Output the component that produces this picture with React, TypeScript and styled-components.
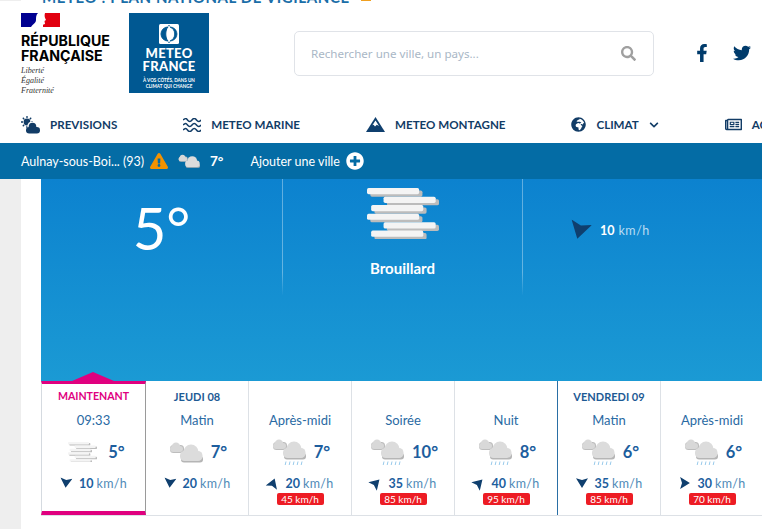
import React from "react";
import styled, { createGlobalStyle } from "styled-components";
import {
  FaChevronDown,
  FaExclamationTriangle,
  FaFacebookF,
  FaGlobeAfrica,
  FaPlusCircle,
  FaRegNewspaper,
  FaSearch,
  FaTwitter,
} from "react-icons/fa";

const Global = createGlobalStyle`
  html, body {
    margin: 0;
    padding: 0;
    background: #fff;
    overflow: hidden;
  }
  * { box-sizing: border-box; }
`;

const font = `"Lato", "Open Sans", sans-serif`;

const Page = styled.div`
  width: 762px;
  height: 529px;
  overflow: hidden;
  font-family: ${font};
  display: flex;
  flex-direction: column;
`;

const TopStrip = styled.div`
  height: 4px;
  padding-left: 42px;
  display: flex;
  align-items: flex-end;
  overflow: hidden;
  background: linear-gradient(#eee, #eee) 0 0 / 21px 1px no-repeat;
  color: #1a6ea8;
  font-size: 15px;
  font-weight: 700;
  line-height: 1;
  letter-spacing: 0.6px;
  white-space: nowrap;
`;

const StripText = styled.span`
  width: 319px;
  margin-bottom: -1px;
  overflow: hidden;
`;

const Ribbon = styled.span`
  width: 10px;
  height: 1px;
  margin-bottom: 3px;
  background: #f0a020;
`;

const Header = styled.header`
  height: 106px;
  padding: 9px 0 0 21px;
  display: flex;
  align-items: flex-start;
`;

const RepublicBlock = styled.div`
  width: 108px;
  display: flex;
  flex-direction: column;
`;

const RepublicName = styled.div`
  margin-top: 6px;
  color: #000;
  font-family: "Inter", sans-serif;
  font-size: 14.2px;
  font-weight: 700;
  line-height: 15px;
`;

const Motto = styled.div`
  margin-top: 3px;
  color: #333;
  font-family: "Liberation Serif", serif;
  font-size: 8px;
  font-style: italic;
  line-height: 10px;
`;

const MfLogo = styled.div`
  width: 80px;
  height: 80px;
  padding-top: 11px;
  display: flex;
  flex-direction: column;
  align-items: center;
  background: #005892;
  color: #fff;
`;

const MfName = styled.div`
  margin-top: 3px;
  font-size: 13px;
  font-weight: 900;
  line-height: 13px;
  letter-spacing: 0.3px;
  text-align: center;
`;

const MfSlogan = styled.div`
  margin-top: 4px;
  font-size: 4.6px;
  font-weight: 700;
  line-height: 6px;
  text-align: center;
`;

const SearchBox = styled.div`
  width: 360px;
  height: 45px;
  margin: 18px 0 0 85px;
  padding: 0 17px 0 16px;
  display: flex;
  align-items: center;
  justify-content: space-between;
  border: 1px solid #e0e3e8;
  border-radius: 5px;
  color: #a9b7c6;
  font-family: "Noto Sans", sans-serif;
  font-size: 11.6px;
`;

const Socials = styled.div`
  margin: 31px 0 0 39px;
  display: flex;
  align-items: center;
  gap: 22px;
  color: #003b6b;
  font-size: 18px;
`;

const Nav = styled.nav`
  height: 33px;
  padding: 0 0 4px 21px;
  display: flex;
  align-items: center;
  gap: 66px;
  overflow: hidden;
`;

const NavItem = styled.div`
  flex-shrink: 0;
  display: flex;
  align-items: center;
  gap: 10px;
  color: #123c66;
  font-size: 11.6px;
  font-weight: 700;
  white-space: nowrap;
`;

const CityBar = styled.div`
  height: 36px;
  padding-left: 21px;
  display: flex;
  align-items: center;
  background: #046ca5;
  color: #fff;
  font-size: 12.5px;
`;

const CityName = styled.span`
  width: 129px;
  white-space: nowrap;
`;

const Spacer = styled.span`
  width: 10px;
`;

const CityTemp = styled.span`
  margin: 0 27px 0 10px;
  font-weight: 700;
  font-size: 13.5px;
`;

const AddCity = styled.span`
  display: flex;
  align-items: center;
  gap: 6px;
`;

const Body = styled.div`
  flex: 1;
  display: flex;
  min-height: 0;
`;

const SideBand = styled.div`
  width: 21px;
  background: #eeeeee;
`;

const Main = styled.main`
  flex: 1;
  min-width: 0;
  margin-left: 20px;
`;

const Hero = styled.section`
  height: 202px;
  display: grid;
  grid-template-columns: 242px 240px 1fr;
  align-items: start;
  background: linear-gradient(#0c82cf, #1b9ad4);
  color: #fff;
`;

const HeroCell = styled.div<{ $divider?: boolean }>`
  height: 116px;
  display: flex;
  flex-direction: column;
  align-items: center;
  border-right: 1px solid transparent;
  ${(p) =>
    p.$divider &&
    `border-image: linear-gradient(rgba(255,255,255,.35) 80%, rgba(255,255,255,0)) 1;`}
`;

const HeroTemp = styled.div`
  margin-top: 15px;
  font-size: 58px;
  font-weight: 400;
  line-height: 68px;
`;

const HeroFog = styled.div`
  margin-top: 9px;
  line-height: 0;
`;

const HeroLabel = styled.div`
  margin-top: 20px;
  font-size: 15px;
  font-weight: 700;
`;

const HeroWind = styled.div`
  margin-top: 41px;
  padding-left: 46px;
  align-self: stretch;
  display: flex;
  align-items: center;
  gap: 10px;
  font-size: 12.5px;
`;

const HeroWindUnit = styled.span`
  margin-left: 4px;
  color: #b8dcf3;
  letter-spacing: 0.5px;
`;

const Strip = styled.section`
  position: relative;
  height: 135px;
  display: flex;
  border-bottom: 1px solid #dde1e6;
`;

const Notch = styled.span`
  position: absolute;
  left: 31px;
  top: -9px;
  width: 42px;
  height: 9px;
  background: #e0007f;
  clip-path: polygon(0 100%, 50% 0, 100% 100%);
`;

const Card = styled.article<{ $active?: boolean; $dayStart?: boolean }>`
  flex: 0 0 ${(p) => (p.$active ? "105px" : "103px")};
  height: 134px;
  padding-top: ${(p) => (p.$active ? "6px" : "9px")};
  display: flex;
  flex-direction: column;
  align-items: center;
  border-right: 1px solid ${(p) => (p.$active ? "#9a9a9a" : p.$dayStart ? "#2a6fa5" : "#dde1e6")};
  ${(p) =>
    p.$active &&
    `border-left: 1px solid #d5dae0;
     border-top: 3px solid #e0007f;
     border-bottom: 4px solid #e0007f;`}
`;

const Day = styled.div<{ $active?: boolean }>`
  height: 13px;
  color: ${(p) => (p.$active ? "#e0007f" : "#1d5a94")};
  font-size: ${(p) => (p.$active ? "10.6px" : "11px")};
  font-weight: 700;
  line-height: 13px;
  white-space: nowrap;
`;

const Moment = styled.div`
  margin-top: 10px;
  color: #2a6aa3;
  font-size: 13px;
  line-height: 15px;
`;

const WeatherRow = styled.div<{ $fog?: boolean }>`
  margin-top: 10px;
  padding-left: ${(p) => (p.$fog ? "6px" : "2px")};
  height: 28px;
  display: flex;
  align-items: center;
  gap: ${(p) => (p.$fog ? "11px" : "8px")};
`;

const Temp = styled.div`
  color: #1d5e9e;
  font-size: 16.5px;
  font-weight: 700;
`;

const WindRow = styled.div`
  margin-top: 10px;
  height: 14px;
  display: flex;
  align-items: center;
  gap: 7px;
  color: #1d5e9e;
  font-size: 12.5px;
  font-weight: 700;
  white-space: nowrap;
`;

const WindUnit = styled.span`
  margin-left: 3px;
  color: #4f8ab8;
  font-weight: 400;
  letter-spacing: 0.3px;
`;

const Gust = styled.div`
  margin-top: 3px;
  width: 47px;
  height: 12px;
  border-radius: 2px;
  background: #ed1c24;
  color: #fff;
  font-size: 10px;
  line-height: 12px;
  text-align: center;
`;

const Arrow = styled.svg<{ $angle: number }>`
  flex-shrink: 0;
  transform: rotate(${(p) => p.$angle}deg);
`;

const WindArrow = ({ angle, size = 12 }: { angle: number; size?: number }) => (
  <Arrow $angle={angle} width={size} height={size} viewBox="0 0 16 16">
    <path d="M8 1.5 L16 14.5 L8 12 L0 14.5 Z" fill="#0f3f6e" />
  </Arrow>
);

const Clouds = ({ rain, width = 34 }: { rain?: boolean; width?: number }) => (
  <svg
    width={width}
    height={(width * 28) / 34}
    viewBox={rain ? "0 0 34 28" : "0 -3 34 28"}
  >
    <rect x="1" y="4" width="14" height="8" rx="3.5" fill="#bdbdbd" />
    <circle cx="7" cy="5.6" r="4.2" fill="#d8d8d8" />
    <rect x="1" y="5" width="13" height="6" rx="3" fill="#d8d8d8" />
    <rect x="12" y="15" width="22" height="6.5" rx="3" fill="#b5b5b5" />
    <circle cx="22" cy="11" r="7.5" fill="#dcdcdc" />
    <rect x="11" y="10" width="22.5" height="10" rx="4.5" fill="#dcdcdc" />
    {rain &&
      [14, 18, 22, 26, 30].map((x) => (
        <path key={x} d={`M${x} 23.5 L${x - 0.8} 27`} stroke="#8cc4e8" strokeWidth="0.9" />
      ))}
  </svg>
);

const fogBars = [
  [0, 0],
  [20, 10.5],
  [5, 20.5],
  [0, 31],
  [20, 41.5],
  [5, 51.5],
];

const Fog = ({ width = 72 }: { width?: number }) => (
  <svg width={width} height={(width * 62) / 87} viewBox="0 0 87 62">
    {fogBars.map(([x, y], i) => (
      <g key={i}>
        <rect x={x + 4} y={y + 3} width={63} height={7.5} rx="2" fill="#bcbcbc" />
        <rect x={x} y={y} width={63} height={7.5} rx="2" fill="#f4f4f4" />
      </g>
    ))}
  </svg>
);

const SunCloud = () => (
  <svg width="19" height="18" viewBox="0 0 19 18">
    <circle cx="6" cy="6" r="3.4" fill="#123c66" />
    <path
      d="M6 0v2M6 10v2M0 6h2M10 6h2M1.8 1.8l1.4 1.4M8.8 8.8l1.4 1.4M1.8 10.2l1.4-1.4M8.8 3.2l1.4-1.4"
      stroke="#123c66"
      strokeWidth="1.3"
    />
    <circle cx="11" cy="10" r="4.6" fill="#fff" />
    <circle cx="11.5" cy="10.5" r="3.8" fill="#123c66" />
    <rect x="5" y="11" width="14" height="6.5" rx="3.2" fill="#123c66" />
  </svg>
);

const Waves = () => (
  <svg width="18" height="14" viewBox="0 0 18 14" fill="none" stroke="#123c66" strokeWidth="1.5">
    <path d="M0 2c3-2 3-2 4.5 0s3 2 4.5 0 3-2 4.5 0 3 2 4.5 0" />
    <path d="M0 7c3-2 3-2 4.5 0s3 2 4.5 0 3-2 4.5 0 3 2 4.5 0" />
    <path d="M0 12c3-2 3-2 4.5 0s3 2 4.5 0 3-2 4.5 0 3 2 4.5 0" />
  </svg>
);

const Mountain = () => (
  <svg width="19" height="15" viewBox="0 0 19 15">
    <path d="M9.5 0 L19 15 H0 Z" fill="#0f3f6e" />
    <path d="M9.5 3.5 L13 9 L10.8 7.8 L9 9.5 L7.6 7.8 L6.4 8.3 Z" fill="#fff" />
  </svg>
);

const Flag = () => (
  <svg width="39" height="14" viewBox="0 0 39 14">
    <rect width="17" height="14" fill="#000091" />
    <rect x="22" width="17" height="14" fill="#e1000f" />
    <path
      d="M17 0 H24 C23 3 24 5 25 7 L23.5 8 L24 11 C22 12 20 12 18 14 H10 C12 11 15 10 15 7 C15 4 15 2 17 0 Z"
      fill="#fff"
    />
  </svg>
);

const MfMark = () => (
  <svg width="20" height="20" viewBox="0 0 20 20">
    <rect width="20" height="20" rx="1.5" fill="#fff" />
    <path d="M9 3 A7 7 0 0 0 9 17 C6 14 6 6 9 3 Z" fill="#005892" strokeWidth="1" stroke="#005892" />
    <path d="M11 3 A7 7 0 0 1 11 17 A7.6 7.6 0 0 0 11 3 Z" fill="#005892" strokeWidth="0.8" stroke="#005892" />
    <circle cx="10" cy="1.8" r="0.8" fill="#005892" />
    <circle cx="10" cy="18.2" r="0.8" fill="#005892" />
  </svg>
);

type Forecast = {
  day?: string;
  moment: string;
  icon: "fog" | "clouds" | "rain";
  temp: number;
  wind: number;
  angle: number;
  gust?: number;
  active?: boolean;
  dayStart?: boolean;
};

const forecasts: Forecast[] = [
  { day: "MAINTENANT", moment: "09:33", icon: "fog", temp: 5, wind: 10, angle: 185, active: true },
  { day: "JEUDI 08", moment: "Matin", icon: "clouds", temp: 7, wind: 20, angle: 185 },
  { moment: "Après-midi", icon: "rain", temp: 7, wind: 20, angle: 20, gust: 45 },
  { moment: "Soirée", icon: "rain", temp: 10, wind: 35, angle: 45, gust: 85 },
  { moment: "Nuit", icon: "rain", temp: 8, wind: 40, angle: 45, gust: 95, dayStart: true },
  { day: "VENDREDI 09", moment: "Matin", icon: "rain", temp: 6, wind: 35, angle: 180, gust: 85 },
  { moment: "Après-midi", icon: "rain", temp: 6, wind: 30, angle: 90, gust: 70 },
];

export default function App() {
  return (
    <Page>
      <Global />
      <TopStrip>
        <StripText>METEO : PLAN NATIONAL DE VIGILANCE</StripText>
        <Ribbon />
      </TopStrip>
      <Header>
        <RepublicBlock>
          <Flag />
          <RepublicName>
            RÉPUBLIQUE
            <br />
            FRANÇAISE
          </RepublicName>
          <Motto>
            Liberté
            <br />
            Égalité
            <br />
            Fraternité
          </Motto>
        </RepublicBlock>
        <MfLogo>
          <MfMark />
          <MfName>
            METEO
            <br />
            FRANCE
          </MfName>
          <MfSlogan>
            À VOS CÔTÉS, DANS UN
            <br />
            CLIMAT QUI CHANGE
          </MfSlogan>
        </MfLogo>
        <SearchBox>
          Rechercher une ville, un pays...
          <FaSearch size={15} color="#a0a0a0" />
        </SearchBox>
        <Socials>
          <FaFacebookF />
          <FaTwitter />
        </Socials>
      </Header>
      <Nav>
        <NavItem>
          <SunCloud />
          PREVISIONS
        </NavItem>
        <NavItem>
          <Waves />
          METEO MARINE
        </NavItem>
        <NavItem>
          <Mountain />
          METEO MONTAGNE
        </NavItem>
        <NavItem>
          <FaGlobeAfrica size={15} />
          CLIMAT
          <FaChevronDown size={10} />
        </NavItem>
        <NavItem>
          <FaRegNewspaper size={17} />
          ACTUALITES
        </NavItem>
      </Nav>
      <CityBar>
        <CityName>Aulnay-sous-Boi... (93)</CityName>
        <FaExclamationTriangle size={18} color="#f39200" />
        <Spacer />
        <Clouds width={22} />
        <CityTemp>7°</CityTemp>
        <AddCity>
          Ajouter une ville
          <FaPlusCircle size={18} />
        </AddCity>
      </CityBar>
      <Body>
        <SideBand />
        <Main>
          <Hero>
            <HeroCell $divider>
              <HeroTemp>5°</HeroTemp>
            </HeroCell>
            <HeroCell $divider>
              <HeroFog>
                <Fog />
              </HeroFog>
              <HeroLabel>Brouillard</HeroLabel>
            </HeroCell>
            <HeroCell>
              <HeroWind>
                <WindArrow angle={195} size={21} />
                <span>
                  <b>10</b>
                  <HeroWindUnit>km/h</HeroWindUnit>
                </span>
              </HeroWind>
            </HeroCell>
          </Hero>
          <Strip>
            <Notch />
            {forecasts.map((f, i) => (
              <Card key={i} $active={f.active} $dayStart={f.dayStart}>
                <Day $active={f.active}>{f.day}</Day>
                <Moment>{f.moment}</Moment>
                <WeatherRow $fog={f.icon === "fog"}>
                  {f.icon === "fog" ? (
                    <Fog width={29} />
                  ) : (
                    <Clouds rain={f.icon === "rain"} />
                  )}
                  <Temp>{f.temp}°</Temp>
                </WeatherRow>
                <WindRow>
                  <WindArrow angle={f.angle} />
                  <span>
                    {f.wind}
                    <WindUnit>km/h</WindUnit>
                  </span>
                </WindRow>
                {f.gust && <Gust>{f.gust} km/h</Gust>}
              </Card>
            ))}
          </Strip>
        </Main>
      </Body>
    </Page>
  );
}
